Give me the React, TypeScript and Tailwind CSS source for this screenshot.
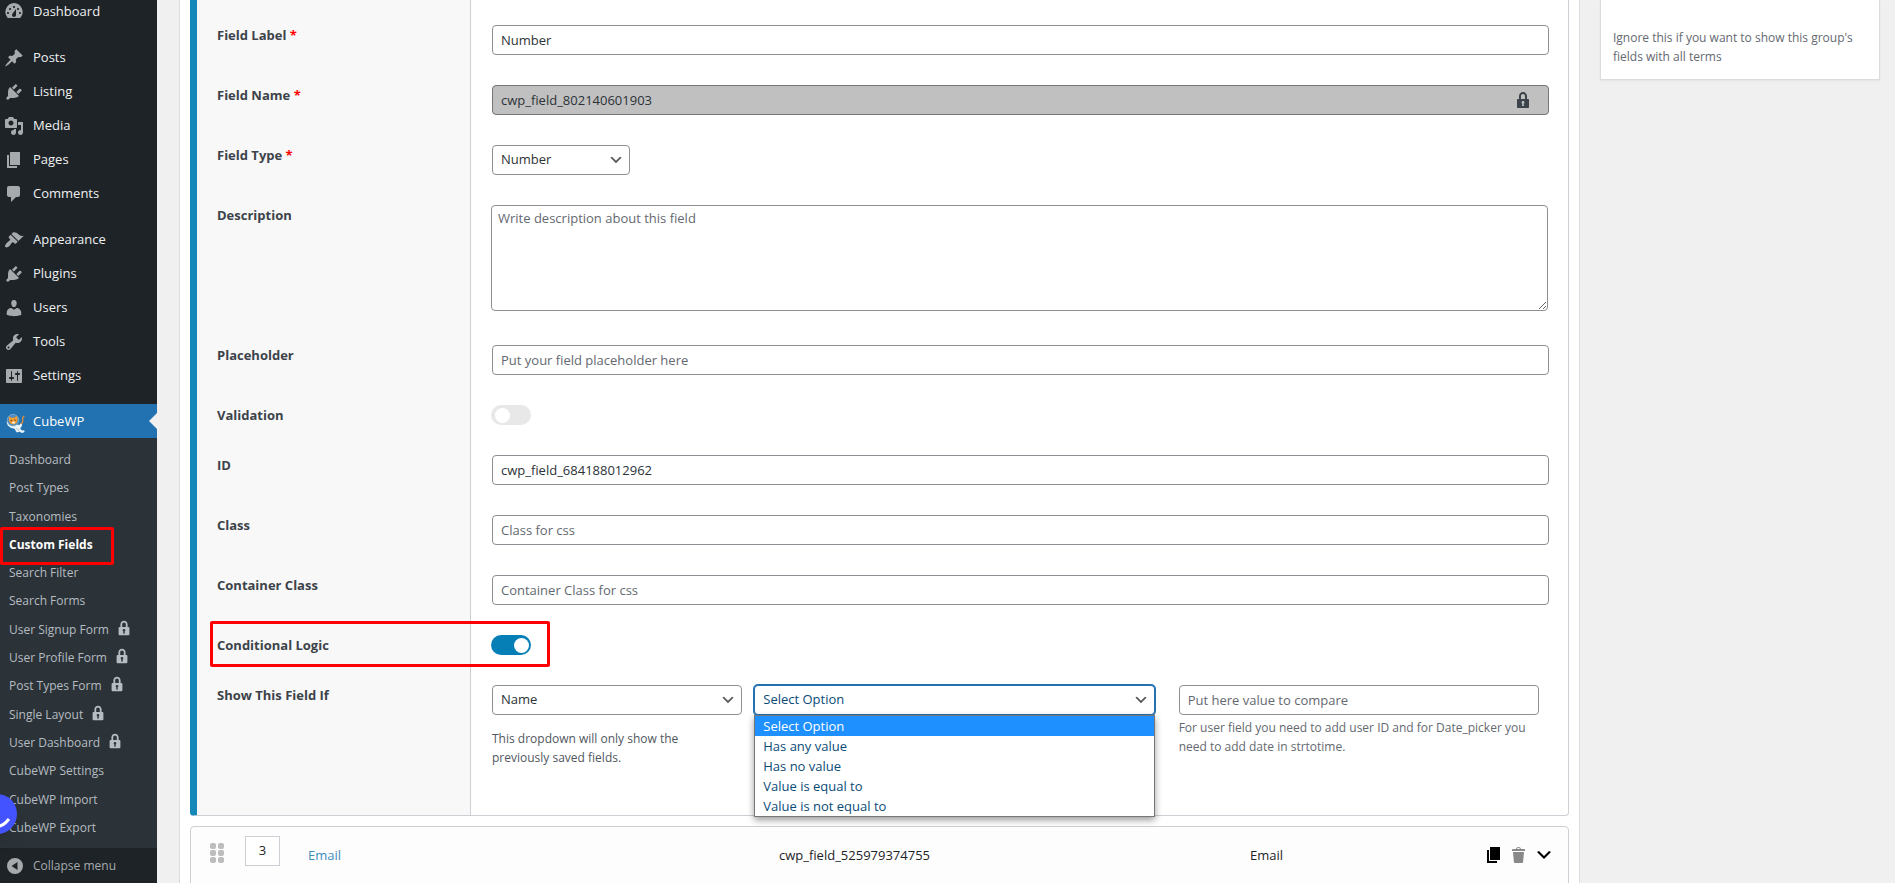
import { useState } from "react";
import type { ReactNode } from "react";

// 20x20 icon shapes used by the admin menu and the field rows
const ICONS = {
  dashboard:
    "M3.76 16h12.48A8.998 8.998 0 0 0 10 1a8.998 8.998 0 0 0-6.24 15zM10 4c.55 0 1 .45 1 1s-.45 1-1 1-1-.45-1-1 .45-1 1-1zM6 6c.55 0 1 .45 1 1s-.45 1-1 1-1-.45-1-1 .45-1 1-1zm8 0c.55 0 1 .45 1 1s-.45 1-1 1-1-.45-1-1 .45-1 1-1zm-5.37 5.55L12 7v6c0 1.1-.9 2-2 2s-2-.9-2-2c0-.57.24-1.08.63-1.45zM4 10c.55 0 1 .45 1 1s-.45 1-1 1-1-.45-1-1 .45-1 1-1zm12 0c.55 0 1 .45 1 1s-.45 1-1 1-1-.45-1-1 .45-1 1-1z",
  post: "M10.44 3.02l1.82-1.82 6.36 6.35-1.83 1.82c-1.05-.68-2.48-.57-3.41.36l-.75.75c-.92.93-1.04 2.35-.35 3.41l-1.83 1.82-2.41-2.41-2.8 2.79c-.42.42-3.38 2.71-3.8 2.29s1.86-3.39 2.28-3.81l2.79-2.79L4.1 9.36l1.83-1.82c1.05.69 2.48.57 3.4-.36l.75-.75c.93-.92 1.05-2.35.36-3.41z",
  plugin:
    "M13.11 4.36L9.87 7.6 8 5.73l3.24-3.24c.35-.34 1.05-.2 1.56.32.52.51.66 1.21.31 1.55zm-8 1.77l.91-1.12 9.01 9.01-1.19.84c-.71.71-2.63 1.16-3.82 1.16H6.14L4.9 17.26c-.59.59-1.54.59-2.12 0-.59-.58-.59-1.53 0-2.12l1.24-1.24v-3.88c0-1.13.4-3.19 1.09-3.89zm7.26 3.97l3.24-3.24c.34-.35 1.04-.21 1.55.31.52.51.66 1.21.31 1.55l-3.24 3.25z",
  media:
    "M13 11V4c0-.55-.45-1-1-1h-1.67L9 1H5L3.67 3H2c-.55 0-1 .45-1 1v7c0 .55.45 1 1 1h10c.55 0 1-.45 1-1zM7 4.5c1.38 0 2.5 1.12 2.5 2.5S8.38 9.5 7 9.5 4.5 8.38 4.5 7 5.62 4.5 7 4.5zM14 6h5v10.5c0 1.38-1.12 2.5-2.5 2.5S14 17.88 14 16.5s1.12-2.5 2.5-2.5c.17 0 .34.02.5.05V9h-3V6zm-4 8.05V13h2v3.5c0 1.38-1.12 2.5-2.5 2.5S7 17.88 7 16.5 8.12 14 9.5 14c.17 0 .34.02.5.05z",
  page: "M6 15V2h10v13H6zm-1 1h8v2H3V5h2v11z",
  comment: "M5 2h9c1.1 0 2 .9 2 2v7c0 1.1-.9 2-2 2h-2l-5 5v-5H5c-1.1 0-2-.9-2-2V4c0-1.1.9-2 2-2z",
  appearance:
    "M14.48 11.06L7.41 3.99l1.5-1.5c.5-.56 2.3-.47 3.51.32 1.21.8 1.43 1.28 2.91 2.1 1.18.64 2.45 1.26 4.45.85zm-.71.71L6.7 4.7 4.93 6.47c-.39.39-.39 1.02 0 1.41l1.06 1.06c.39.39.39 1.03 0 1.42-.6.6-1.43 1.11-2.21 1.69-.35.26-.7.53-1.01.84C1.43 14.23.4 16.08 1.4 17.07c.99 1 2.84-.03 4.18-1.36.31-.31.58-.66.85-1.02.57-.78 1.08-1.61 1.69-2.21.39-.39 1.02-.39 1.41 0l1.06 1.06c.39.39 1.02.39 1.41 0z",
  users:
    "M10 9.25c-2.27 0-2.73-3.44-2.73-3.44C7 4.02 7.82 2 9.97 2c2.16 0 2.98 2.02 2.71 3.81 0 0-.41 3.44-2.68 3.44zm0 2.57L12.72 10c2.39 0 4.52 2.33 4.52 4.53v2.49s-3.65 1.13-7.24 1.13c-3.65 0-7.24-1.13-7.24-1.13v-2.49c0-2.25 1.94-4.48 4.47-4.48z",
  tools:
    "M16.68 9.77c-1.34 1.34-3.3 1.67-4.95.99l-5.41 6.52c-.99.99-2.59.99-3.58 0s-.99-2.59 0-3.57l6.52-5.42c-.68-1.65-.35-3.61.99-4.95 1.28-1.28 3.12-1.62 4.72-1.06l-2.89 2.89 2.82 2.82 2.86-2.87c.53 1.58.18 3.39-1.08 4.65zM3.81 16.21c.4.39 1.04.39 1.43 0 .4-.4.4-1.04 0-1.43-.39-.4-1.03-.4-1.43 0-.39.39-.39 1.03 0 1.43z",
  settings:
    "M18 16V4c0-.55-.45-1-1-1H3c-.55 0-1 .45-1 1v12c0 .55.45 1 1 1h14c.55 0 1-.45 1-1zM8 11h1c.55 0 1 .45 1 1s-.45 1-1 1H8v1.5c0 .28-.22.5-.5.5s-.5-.22-.5-.5V13H6c-.55 0-1-.45-1-1s.45-1 1-1h1V5.5c0-.28.22-.5.5-.5s.5.22.5.5V11zm5-2h-1c-.55 0-1-.45-1-1s.45-1 1-1h1V5.5c0-.28.22-.5.5-.5s.5.22.5.5V7h1c.55 0 1 .45 1 1s-.45 1-1 1h-1v5.5c0 .28-.22.5-.5.5s-.5-.22-.5-.5V9z",
  lock: "M14 9h1c.55 0 1 .45 1 1v7c0 .55-.45 1-1 1H5c-.55 0-1-.45-1-1v-7c0-.55.45-1 1-1h1V6c0-2.21 1.79-4 4-4s4 1.79 4 4v3zm-2 0V6c0-1.1-.9-2-2-2s-2 .9-2 2v3h4zm-1 7l-.36-2.15c.51-.24.86-.75.86-1.35 0-.83-.67-1.5-1.5-1.5s-1.5.67-1.5 1.5c0 .6.35 1.11.86 1.35L9 16h2z",
  trash:
    "M12 4h3c.6 0 1 .4 1 1v1H3V5c0-.6.5-1 1-1h3c.2-1.1 1.3-2 2.5-2s2.3.9 2.5 2zM8 4h3c-.2-.6-.9-1-1.5-1S8.2 3.4 8 4zM4 7h11l-.9 10.1c0 .5-.5.9-1 .9H5.9c-.5 0-.9-.4-1-.9L4 7z",
  chevron: "M5 6l5 5 5-5 2 1-7 7-7-7z",
  collapse: "M10 2a8 8 0 1 0 0 16 8 8 0 0 0 0-16zm2.5 12L6.5 10l6-4v8z",
};

type IconName = keyof typeof ICONS;

function Icon({ name, className = "w-5 h-5" }: { name: IconName; className?: string }) {
  return (
    <svg viewBox="0 0 20 20" fill="currentColor" fillRule="evenodd" aria-hidden="true" className={`shrink-0 ${className}`}>
      <path d={ICONS[name]} />
    </svg>
  );
}

// orange cat in a space suit
function CubeLogo() {
  return (
    <svg viewBox="0 0 20 20" aria-hidden="true" className="w-5 h-5 mt-1 shrink-0">
      <path d="M18.8 2.5c-1.6.6-1.2 2.2-1 3.6.2 1.6-.6 3-1.8 3.8" fill="none" stroke="#c98a45" strokeWidth="1.5" strokeLinecap="round" />
      <path d="M1.5 8l1-.5 2.2 3 3 1.5 4-1.5 2.6.6 1.3-1.6 1.6 1-.8 2.6-1.4 1.2 2 2.2 2.2-.2.4 1.6-2.4 1.2-3-1.4-2.2.7-1-1-1.4-2.6-3.6-.8-3.2-2.4z" fill="#eaf3f7" />
      <path d="M11 14.5l2.5 1.2 1 2" fill="none" stroke="#a9c4d4" strokeWidth=".8" />
      <circle cx="8" cy="6.2" r="5.8" fill="#4d8cc0" stroke="#8db9da" strokeWidth=".7" />
      <path d="M3.8 2.6l2.4 1.2 3.4-.2 2.4-1.8.6 3.6-.6 3.4-3 1.8-3.4-.8-1.6-2.8z" fill="#f29b30" />
      <path d="M6.8 8.2l2-.7 1.6.6-.8 1.5-1.8.2z" fill="#fff1dc" />
      <circle cx="6.3" cy="6.6" r=".7" fill="#4a2c14" />
      <circle cx="10" cy="6.1" r=".7" fill="#4a2c14" />
    </svg>
  );
}

const MENU: { label: string; icon: IconName }[][] = [
  [{ label: "Dashboard", icon: "dashboard" }],
  [
    { label: "Posts", icon: "post" },
    { label: "Listing", icon: "plugin" },
    { label: "Media", icon: "media" },
    { label: "Pages", icon: "page" },
    { label: "Comments", icon: "comment" },
  ],
  [
    { label: "Appearance", icon: "appearance" },
    { label: "Plugins", icon: "plugin" },
    { label: "Users", icon: "users" },
    { label: "Tools", icon: "tools" },
    { label: "Settings", icon: "settings" },
  ],
];

const SUBMENU = [
  { label: "Dashboard" },
  { label: "Post Types" },
  { label: "Taxonomies" },
  { label: "Custom Fields", current: true },
  { label: "Search Filter" },
  { label: "Search Forms" },
  { label: "User Signup Form", locked: true },
  { label: "User Profile Form", locked: true },
  { label: "Post Types Form", locked: true },
  { label: "Single Layout", locked: true },
  { label: "User Dashboard", locked: true },
  { label: "CubeWP Settings" },
  { label: "CubeWP Import" },
  { label: "CubeWP Export" },
];

const OPERATORS = ["Select Option", "Has any value", "Has no value", "Value is equal to", "Value is not equal to"];

function Sidebar() {
  return (
    <nav className="w-[157px] shrink-0 flex flex-col bg-[#1d2327] text-[#f0f0f1]">
      <div className="-mt-1.5 flex flex-col gap-3">
        {MENU.map((group, i) => (
          <ul key={i}>
            {group.map(item => (
              <li key={item.label}>
                <a href="#" className="h-[34px] pl-1 pt-0.5 flex items-center gap-[9px]">
                  <span className="text-[#a7aaad]">
                    <Icon name={item.icon} />
                  </span>
                  {item.label}
                </a>
              </li>
            ))}
          </ul>
        ))}
        <a href="#" className="relative h-[34px] pl-[5px] pt-0.5 flex items-center gap-2 bg-[#2271b1] text-white">
          <CubeLogo />
          CubeWP
          <span className="absolute right-0 top-[9px] border-y-8 border-r-8 border-y-transparent border-r-[#f0f0f1]" />
        </a>
      </div>

      <ul className="flex-1 flex flex-col justify-between pt-2 pb-1.5 bg-[#2c3338] text-xs text-[#b5bcc2]">
        {SUBMENU.map(item => (
          <li key={item.label} className="relative">
            <a href="#" className={`h-7 pl-[9px] flex items-center gap-1.5 ${item.current ? "font-bold text-white" : ""}`}>
              {item.label}
              {item.locked && <Icon name="lock" className="w-[18px] h-[18px] mb-1" />}
            </a>
            {item.current && <span className="absolute left-0 -top-1 w-[114px] h-[38px] border-3 border-[#ff0000] rounded-xs" />}
          </li>
        ))}
      </ul>

      <button type="button" className="h-[35px] pl-[5px] flex items-center gap-2 text-xs text-[#a7aaad]">
        <Icon name="collapse" />
        Collapse menu
      </button>
    </nav>
  );
}

const inputClass =
  "block ml-px w-full h-[30px] px-2 bg-white border border-[#8c8f94] rounded text-[#2c3338] placeholder-[#646970]";

interface RowProps {
  label: string;
  htmlFor: string;
  required?: boolean;
  highlight?: boolean;
  className?: string;
  children: ReactNode;
}

function Row({ label, htmlFor, required, highlight, className = "", children }: RowProps) {
  return (
    <div className={`relative flex ${className}`}>
      <div className="w-[274px] shrink-0 px-5 py-[15px] bg-[#f8f8f8] border-r border-[#ccd0d4]">
        <label htmlFor={htmlFor} className="block leading-5 font-bold text-[#3c434a]">
          {label} {required && <span className="text-[#ff0000]">*</span>}
        </label>
      </div>
      <div className="flex-1 min-w-0 px-5 py-[15px]">{children}</div>
      {highlight && <span className="absolute left-[13px] top-px w-[340px] h-[46px] border-3 border-[#ff0000] rounded-xs" />}
    </div>
  );
}

function Toggle({ id, defaultChecked }: { id: string; defaultChecked?: boolean }) {
  return (
    <input
      id={id}
      type="checkbox"
      role="switch"
      defaultChecked={defaultChecked}
      className="block appearance-none w-10 h-5 rounded-full bg-[#e8e8e8] checked:bg-[#067fb7] relative before:absolute before:left-1 before:top-[3px] before:size-[15px] before:rounded-full before:bg-white checked:before:left-[23px]"
    />
  );
}

interface SelectProps {
  id: string;
  label?: string;
  value: string;
  options: string[];
  className?: string;
  selectClass?: string;
  onChange?: (v: string) => void;
}

function Select({ id, label, value, options, className = "", selectClass = "border-[#8c8f94] text-[#2c3338]", onChange }: SelectProps) {
  return (
    <div className={`relative ${className}`}>
      <select
        id={id}
        aria-label={label}
        value={value}
        onChange={e => onChange?.(e.target.value)}
        className={`block appearance-none w-full h-[30px] pl-2 pr-6 bg-white border rounded ${selectClass}`}
      >
        {options.map(o => (
          <option key={o}>{o}</option>
        ))}
      </select>
      <svg viewBox="0 0 20 20" className="absolute right-1.5 top-[7px] size-4 pointer-events-none" aria-hidden="true">
        <path d="M5 6l5 5 5-5 2 1-7 7-7-7 2-1z" fill="#555555" />
      </svg>
    </div>
  );
}

function FieldEditor() {
  const [operator, setOperator] = useState(OPERATORS[0]);

  return (
    <section className="flex flex-col border-r border-b border-[#ccd0d4] border-l-7 border-l-[#1587b9] rounded-b bg-white">
      <div className="h-2.5 w-[274px] bg-[#f8f8f8] border-r border-[#ccd0d4]" />
      <Row label="Field Label" htmlFor="label" required>
        <input id="label" type="text" defaultValue="Number" className={inputClass} />
      </Row>
      <Row label="Field Name" htmlFor="name" required>
        <div className="relative">
          <input
            id="name"
            type="text"
            readOnly
            defaultValue="cwp_field_802140601903"
            className="block ml-px w-full h-[30px] px-2 bg-[#c0c0c0] border border-[#72757a] rounded text-[#2c3338]"
          />
          <span className="absolute right-[15px] top-[5px] text-[#3c434a]">
            <Icon name="lock" />
          </span>
        </div>
      </Row>
      <Row label="Field Type" htmlFor="type" required>
        <Select id="type" value="Number" options={["Number"]} className="ml-px w-[138px]" />
      </Row>
      <Row label="Description" htmlFor="description" className="h-[140px]">
        <textarea
          id="description"
          placeholder="Write description about this field"
          className="block w-full h-[106px] px-1.5 py-0.5 leading-5 border border-[#8c8f94] rounded text-[#2c3338] placeholder-[#646970]"
        />
      </Row>
      <Row label="Placeholder" htmlFor="placeholder">
        <input id="placeholder" type="text" placeholder="Put your field placeholder here" className={inputClass} />
      </Row>
      <Row label="Validation" htmlFor="validation">
        <Toggle id="validation" />
      </Row>
      <Row label="ID" htmlFor="id">
        <input id="id" type="text" defaultValue="cwp_field_684188012962" className={inputClass} />
      </Row>
      <Row label="Class" htmlFor="class">
        <input id="class" type="text" placeholder="Class for css" className={inputClass} />
      </Row>
      <Row label="Container Class" htmlFor="container">
        <input id="container" type="text" placeholder="Container Class for css" className={inputClass} />
      </Row>
      <Row label="Conditional Logic" htmlFor="conditional" highlight>
        <Toggle id="conditional" defaultChecked />
      </Row>
      <Row label="Show This Field If" htmlFor="field" className="min-h-[145px]">
        <div className="flex pl-px pr-[9px]">
          <div className="flex-[25] min-w-0">
            <Select id="field" value="Name" options={["Name"]} />
            <p className="mt-3.5 pr-10 text-xs leading-[19px] text-[#50575e]">
              This dropdown will only show the previously saved fields.
            </p>
          </div>
          <div className="relative flex-[40] min-w-0 ml-3">
            <Select
              id="operator"
              label="Operator"
              value={operator}
              options={OPERATORS}
              onChange={setOperator}
              selectClass="border-[#2271b1] ring-1 ring-[#2271b1] text-[#0a4b78]"
            />
            <ul
              role="listbox"
              className="absolute z-10 inset-x-0 top-[30px] bg-white border border-[#767676] shadow-[0_3px_7px_rgba(0,0,0,0.4)] text-[#0a4b78]"
            >
              {OPERATORS.map(o => (
                <li
                  key={o}
                  role="option"
                  aria-selected={o === operator}
                  onClick={() => setOperator(o)}
                  className={`h-5 px-2 leading-5 ${o === operator ? "bg-[#1e90ff] text-white" : ""}`}
                >
                  {o}
                </li>
              ))}
            </ul>
          </div>
          <div className="flex-[36] min-w-0 ml-6">
            <input
              type="text"
              aria-label="Value"
              placeholder="Put here value to compare"
              className="block w-full h-[30px] px-2 bg-white border border-[#8c8f94] rounded text-[#2c3338] placeholder-[#646970]"
            />
            <p className="mt-[3px] text-xs leading-[19px] text-[#646970]">
              For user field you need to add user ID and for Date_picker you need to add date in strtotime.
            </p>
          </div>
        </div>
      </Row>
    </section>
  );
}

function CollapsedField() {
  return (
    <section className="mt-2.5 h-[72px] pl-[19px] pr-3.5 pt-[9px] flex items-start bg-[#fdfdfd] border border-[#ccd0d4] rounded text-[#1d2327]">
      <svg viewBox="0 0 14 20" fill="#bdbdbd" aria-hidden="true" className="mt-[7px] w-3.5 h-5">
        {[0, 7, 14].map(y => (
          <g key={y}>
            <rect x="0" y={y} width="6" height="6" rx="2" />
            <rect x="8" y={y} width="6" height="6" rx="2" />
          </g>
        ))}
      </svg>
      <span className="ml-[21px] w-[35px] h-[30px] flex items-center justify-center bg-white border border-[#ccd0d4]">3</span>
      <div className="ml-7 mt-[9px] flex-1 grid grid-cols-[1fr_1fr_304px] items-center leading-5">
        <a href="#" className="font-medium text-[#3c8dbc]">Email</a>
        <span>cwp_field_525979374755</span>
        <div className="flex justify-between">
          <span>Email</span>
          <div className="flex gap-[5px]">
            <button type="button" aria-label="Duplicate" className="text-black"><Icon name="page" /></button>
            <button type="button" aria-label="Delete" className="text-[#888888]"><Icon name="trash" /></button>
            <button type="button" aria-label="Expand" className="text-black"><Icon name="chevron" /></button>
          </div>
        </div>
      </div>
    </section>
  );
}

export default function App() {
  return (
    <div className="h-screen overflow-hidden flex bg-[#f0f0f1] font-['Segoe_UI','Open_Sans',sans-serif] text-[13px]">
      <Sidebar />
      <main className="flex-1 min-w-0 pl-[22px] pr-[15px] flex items-start gap-5">
        <div className="flex-1 min-w-0 px-2.5 bg-white border-x border-[#dcdcde]">
          <FieldEditor />
          <CollapsedField />
        </div>
        <aside className="w-[280px] h-20 shrink-0 px-3 pt-7 bg-white border border-t-0 border-[#dcdcde] shadow-xs text-xs leading-[19px] text-[#646970]">
          Ignore this if you want to show this group's fields with all terms
        </aside>
      </main>

      {/* chat launcher peeking in from the left edge */}
      <button type="button" aria-label="Open chat" className="fixed -left-[23px] bottom-[49px] size-10 rounded-full bg-[#4353ff] shadow-lg">
        <svg viewBox="0 0 40 40" className="size-10" aria-hidden="true">
          <path d="M8 25Q20 40 32 25" fill="none" stroke="#fff" strokeWidth="3" />
        </svg>
      </button>
    </div>
  );
}
